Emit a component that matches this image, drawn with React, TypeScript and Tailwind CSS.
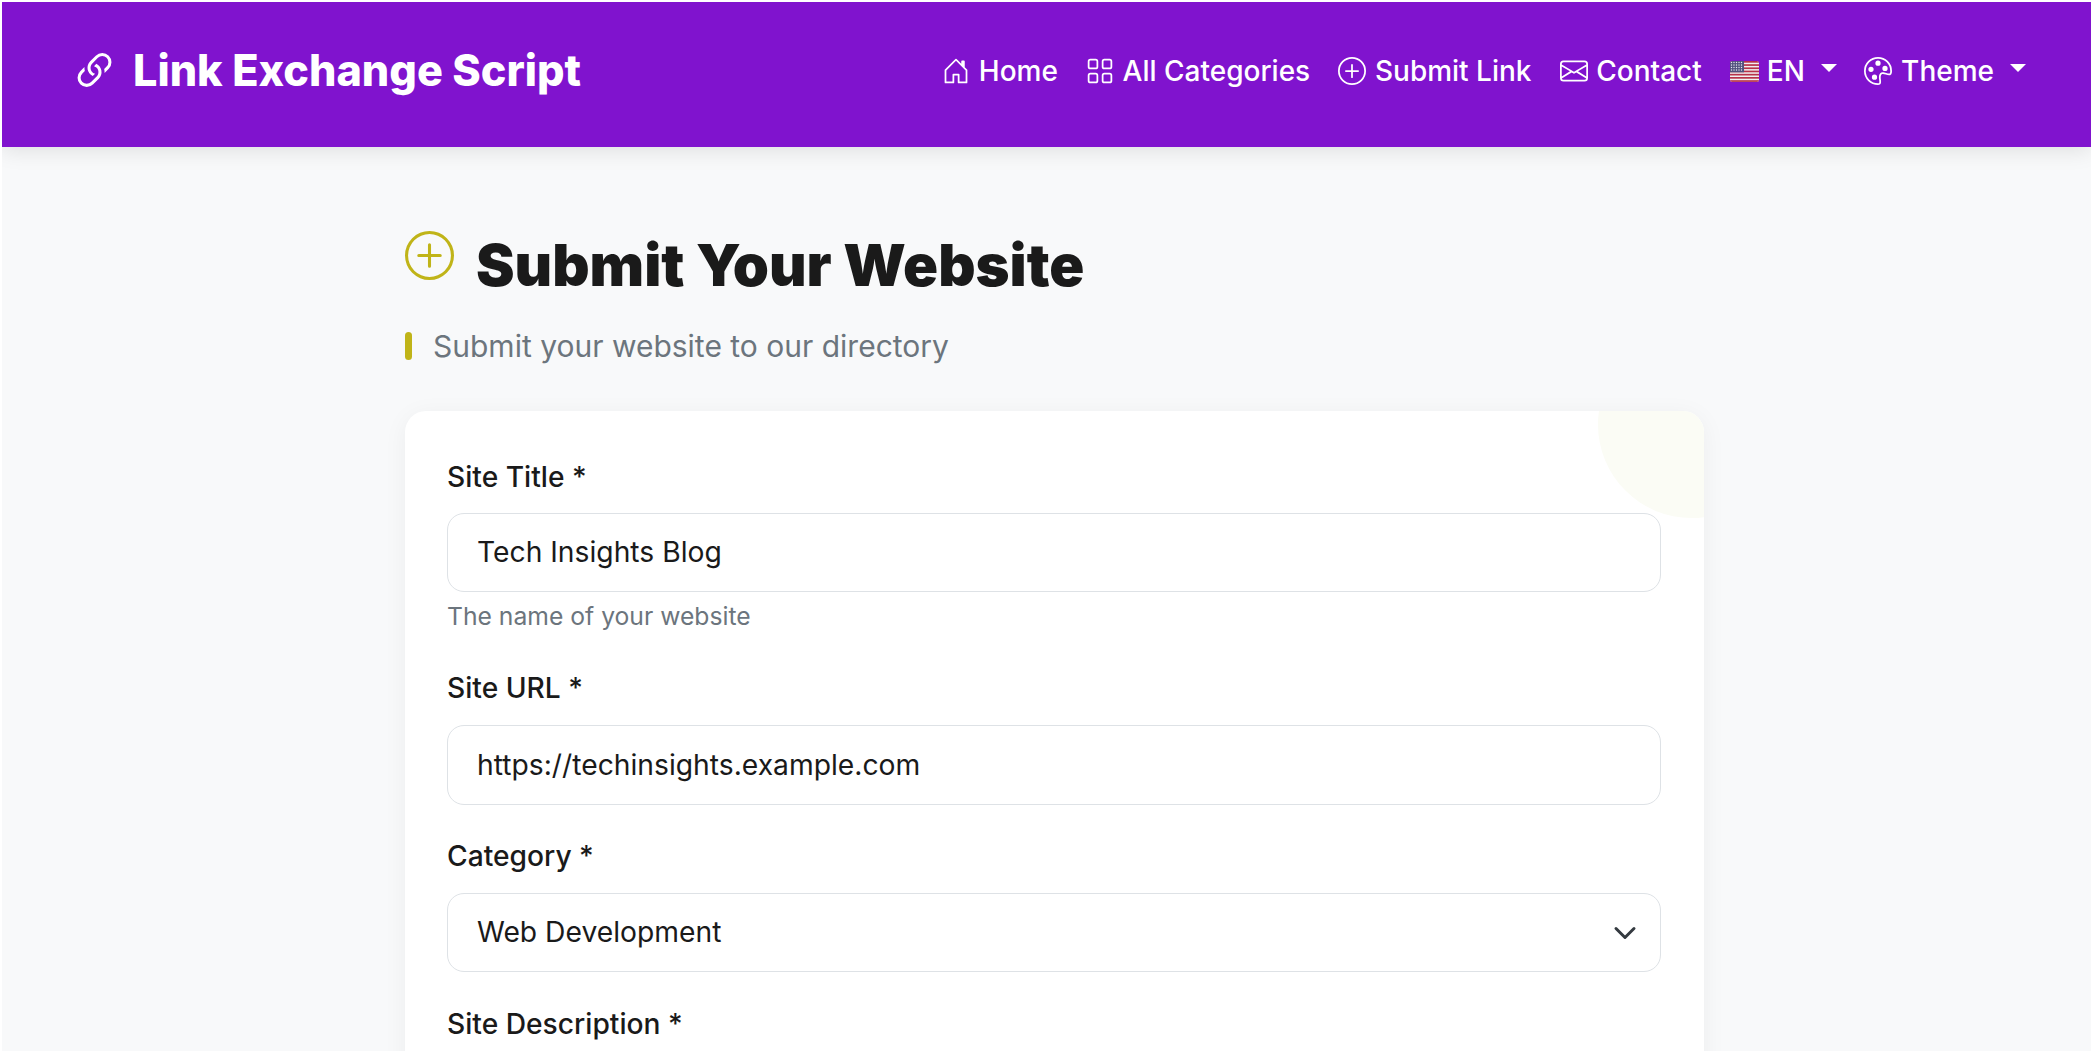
import { BsEnvelope, BsGrid, BsHouseDoor, BsLink45Deg, BsPalette, BsPlusCircle } from "react-icons/bs";
import type { ReactNode } from "react";

const inter = "font-['Inter','Liberation_Sans',sans-serif]";

const Caret = () => (
  <span className="ml-[16px] h-0 w-0 -translate-y-[3px] border-x-[8px] border-t-[8px] border-x-transparent border-t-white" />
);

const UsFlag = () => (
  <svg viewBox="0 0 29 21" className="mr-[8px] h-[21px] w-[29px]">
    <defs>
      <clipPath id="flag-corner">
        <rect width="29" height="21" rx="2.5" />
      </clipPath>
    </defs>
    <g clipPath="url(#flag-corner)">
      <rect width="29" height="21" fill="#f0f0f0" />
      {[0, 3.2, 6.4, 9.6, 12.8, 16, 19.2].map((y) => (
        <rect key={y} y={y} width="29" height="1.7" fill="#b8324a" />
      ))}
      <rect width="14" height="11.3" fill="#52527e" />
      {[1.5, 4, 6.5, 9].map((y) =>
        [1.5, 4, 6.5, 9, 11.5].map((x) => (
          <circle key={`${x}-${y}`} cx={x} cy={y} r="0.7" fill="#e8e8f0" />
        ))
      )}
    </g>
  </svg>
);

const NavLink = ({ icon, children }: { icon: ReactNode; children: ReactNode }) => (
  <a className="mr-[28px] flex items-center">
    {icon}
    <span>{children}</span>
  </a>
);

const navIcon = "mr-[8.75px] h-[28px] w-[28px]";

const Field = ({ label, hint, children, className }: { label: string; hint?: string; children: ReactNode; className: string }) => (
  <div className={className}>
    <label className="block h-[28px] text-[28.2px] leading-[28px] font-medium text-[#1a1a1a]">{label}</label>
    {children}
    {hint && <p className="mt-[8.5px] h-[36.5px] text-[24.7px] leading-[30px] text-[#6c757d]">{hint}</p>}
  </div>
);

const inputClass =
  "block h-[79.5px] w-full rounded-[17px] border-[1.75px] border-[#dee2e6] bg-white px-[29px] text-[28.25px] text-[#1a1a1a] outline-none";

export default function App() {
  return (
    <div className={`h-[1051px] overflow-hidden bg-white pt-[2px] pl-[2px] ${inter}`}>
      <div className="h-[1049px] overflow-hidden bg-[#f8f9fa]">
        <nav className="flex h-[145px] items-center justify-between bg-[#8013ce] pr-[65px] pb-[7px] pl-[67.5px] text-white shadow-[0_4px_20px_rgba(0,0,0,0.1)]">
          <a className="flex items-center">
            <BsLink45Deg className="mr-[14.5px] h-[49px] w-[49px]" />
            <span className="text-[43.2px] leading-none font-extrabold">Link Exchange Script</span>
          </a>
          <div className="flex items-center text-[28px] leading-none font-medium">
            <NavLink icon={<BsHouseDoor className={navIcon} />}>Home</NavLink>
            <NavLink icon={<BsGrid className={navIcon} />}>All Categories</NavLink>
            <NavLink icon={<BsPlusCircle className={navIcon} />}>Submit Link</NavLink>
            <NavLink icon={<BsEnvelope className={navIcon} />}>Contact</NavLink>
            <a className="mr-[27.5px] flex items-center">
              <UsFlag />
              <span>EN</span>
              <Caret />
            </a>
            <a className="flex items-center">
              <BsPalette className={navIcon} />
              <span>Theme</span>
              <Caret />
            </a>
          </div>
        </nav>

        <main className="ml-[403px] w-[1299px] pt-[80px]">
          <div className="flex h-[74px] items-start">
            <BsPlusCircle className="mt-[4px] mr-[22px] h-[49px] w-[49px] text-[#c0b418]" />
            <h1 className="text-[57.9px] leading-[76px] font-black text-[#1a1a1a]">Submit Your Website</h1>
          </div>
          <div className="mt-[29px] flex h-[32px] items-center">
            <span className="mr-[21px] h-[28px] w-[7px] rounded-full bg-[#c0b418]" />
            <p className="text-[30px] leading-[32px] text-[#6c757d]">Submit your website to our directory</p>
          </div>

          <form className="relative mt-[49px] h-[800px] overflow-hidden rounded-[21px] bg-white pt-[51.5px] pr-[43px] pl-[42px] shadow-[0_4px_24px_rgba(0,0,0,0.05)]">
            <div className="absolute -top-[80px] -right-[81px] h-[187px] w-[187px] rounded-full bg-[#fbfcf5]" />
            <Field label="Site Title *" hint="The name of your website" className="relative">
              <input readOnly value="Tech Insights Blog" className={`mt-[22px] ${inputClass}`} />
            </Field>
            <Field label="Site URL *" className="relative mt-[37px]">
              <input readOnly value="https://techinsights.example.com" className={`mt-[23px] ${inputClass}`} />
            </Field>
            <Field label="Category *" className="relative mt-[37px]">
              <div className="relative mt-[23px]">
                <select className={`appearance-none ${inputClass}`} defaultValue="web">
                  <option value="web">Web Development</option>
                </select>
                <svg viewBox="0 0 16 16" className="absolute top-[28px] right-[24px] h-[24px] w-[24px]" fill="none" stroke="#343a40" strokeWidth="2" strokeLinecap="round" strokeLinejoin="round">
                  <path d="m2 5 6 6 6-6" />
                </svg>
              </div>
            </Field>
            <Field label="Site Description *" className="relative mt-[37.5px]">
              <textarea readOnly className={`mt-[23px] h-[160px] ${inputClass}`} />
            </Field>
          </form>
        </main>
      </div>
    </div>
  );
}
